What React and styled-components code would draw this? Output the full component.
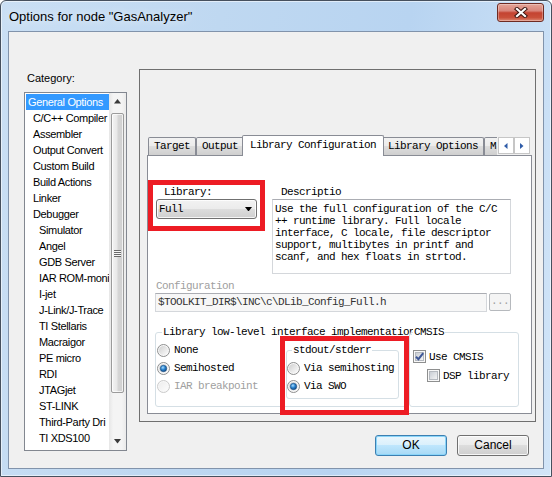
import React, { useId } from "react";
import styled, { createGlobalStyle } from "styled-components";

const UI = `"Liberation Sans", Arial, sans-serif`;
const MONO = `"Liberation Mono", "DejaVu Sans Mono", monospace`;

const GlobalStyle = createGlobalStyle`
  html, body { margin: 0; padding: 0; }
  body { width: 552px; height: 477px; overflow: hidden; background: #fff; }
  * { box-sizing: border-box; }
`;

// names are shown as the narrow list cuts them
const categories = [
  ["General Options", 0],
  ["C/C++ Compiler", 1],
  ["Assembler", 1],
  ["Output Convert", 1],
  ["Custom Build", 1],
  ["Build Actions", 1],
  ["Linker", 1],
  ["Debugger", 1],
  ["Simulator", 2],
  ["Angel", 2],
  ["GDB Server", 2],
  ["IAR ROM-moni", 2],
  ["I-jet", 2],
  ["J-Link/J-Trace", 2],
  ["TI Stellaris", 2],
  ["Macraigor", 2],
  ["PE micro", 2],
  ["RDI", 2],
  ["JTAGjet", 2],
  ["ST-LINK", 2],
  ["Third-Party Dri", 2],
  ["TI XDS100", 2],
];

const description = [
  "Use the full configuration of the C/C",
  "++ runtime library. Full locale",
  "interface, C locale, file descriptor",
  "support, multibytes in printf and",
  "scanf, and hex floats in strtod.",
];

const tabs = ["Target", "Output", "Library Configuration", "Library Options", "M"];

/* ---------- window frame ---------- */

const Window = styled.div`
  width: 552px;
  height: 477px;
  display: flex;
  flex-direction: column;
  padding: 0 7px 7px;
  border: 1px solid #46505e;
  border-radius: 6px 6px 0 0;
  background: linear-gradient(100deg, #cadff4 0%, #bfd8f1 35%, #b8d4f1 65%, #d2e5f8 100%);
  box-shadow: inset 0 0 0 1px rgba(255, 255, 255, 0.55);
`;

const TitleBar = styled.div`
  height: 30px;
  display: flex;
  justify-content: space-between;
  align-items: flex-start;
`;

const Title = styled.div`
  margin-left: 1px;
  font-family: ${UI};
  font-size: 13px;
  line-height: 31px;
  color: #000;
  text-shadow: 0 0 8px rgba(255, 255, 255, 0.9);
`;

const CloseButton = styled.div`
  margin-top: 2px;
  width: 47px;
  height: 19px;
  border: 1px solid #6e2b23;
  border-radius: 3px;
  background: linear-gradient(#e4a497 0%, #d9857a 40%, #c44331 52%, #c9503a 80%, #dd8a76 100%);
  box-shadow: inset 0 0 0 1px rgba(255, 255, 255, 0.3);
  display: flex;
  align-items: center;
  justify-content: center;
`;

const Client = styled.div`
  flex: 1;
  display: flex;
  border: 1px solid #8193ab;
  background: #f0f0f0;
  padding: 37px 7px 0 15px;
`;

/* ---------- category list ---------- */

const Sidebar = styled.div`
  width: 103px;
  display: flex;
  flex-direction: column;
  padding-top: 2px;
`;

const SideLabel = styled.div`
  margin-left: 3px;
  font-family: ${UI};
  font-size: 11px;
  line-height: 14px;
  color: #000;
`;

const ListBox = styled.div`
  margin-top: 7px;
  height: 359px;
  border: 1px solid #828790;
  background: #fff;
  display: flex;
`;

const Items = styled.div`
  flex: 1;
  min-width: 0;
  padding: 1px 0 0 1px;
  overflow: hidden;
`;

const Item = styled.div`
  height: 16px;
  line-height: 16px;
  padding-left: ${(p) => 2 + [0, 5, 11][p.$level]}px;
  font-family: ${UI};
  font-size: 11px;
  letter-spacing: -0.35px;
  white-space: nowrap;
  color: ${(p) => (p.$selected ? "#fff" : "#000")};
  background: ${(p) => (p.$selected ? "#3399ff" : "transparent")};
`;

const ScrollBar = styled.div`
  width: 17px;
  flex-shrink: 0;
  display: flex;
  flex-direction: column;
  background: linear-gradient(90deg, #e6e6e6 0%, #f4f4f4 25%, #f4f4f4 75%, #eaeaea 100%);
`;

const ScrollArrow = styled.div`
  height: 17px;
  display: flex;
  align-items: center;
  justify-content: center;
`;

const Track = styled.div`
  flex: 1;
  display: flex;
  flex-direction: column;
  padding: 3px 2px 0;
`;

const Thumb = styled.div`
  height: 280px;
  border: 1px solid #9b9b9b;
  border-radius: 2px;
  background: linear-gradient(90deg, #f4f4f4 0%, #e8e8e8 45%, #d6d6d6 55%, #cfcfcf 100%);
  box-shadow: inset 0 0 0 1px rgba(255, 255, 255, 0.7);
  display: flex;
  align-items: center;
  justify-content: center;
`;

const Grip = styled.div`
  width: 7px;
  height: 7px;
  background: repeating-linear-gradient(#6a6a6a 0 1px, #f6f6f6 1px 2px);
`;

/* ---------- main panel ---------- */

const Main = styled.div`
  margin-left: 12px;
  width: 397px;
  display: flex;
  flex-direction: column;
`;

const Panel = styled.div`
  height: 353px;
  border: 1px solid #6f6f6f;
  padding: 65px 3px 7px 7px;
  display: flex;
  flex-direction: column;
`;

const TabStrip = styled.div`
  position: relative;
  z-index: 1;
  height: 21px;
  margin-bottom: -1px;
  display: flex;
  align-items: flex-start;
`;

const TabList = styled.div`
  flex: 1;
  height: 21px;
  padding-left: 1px;
  overflow: hidden;
  display: flex;
  align-items: flex-end;
`;

const Tab = styled.div`
  flex-shrink: 0;
  position: relative;
  z-index: ${(p) => (p.$active ? 2 : 1)};
  height: ${(p) => (p.$active ? 21 : 18)}px;
  margin: 0 ${(p) => (p.$active ? -2 : 0)}px ${(p) => (p.$active ? 0 : 1)}px;
  padding: 0 ${(p) => (p.$active ? 7 : 5)}px;
  border: 1px solid #898c95;
  border-bottom: none;
  border-radius: 2px 2px 0 0;
  background: ${(p) =>
    p.$active ? "#fff" : "linear-gradient(#f2f2f2 0%, #ebebeb 50%, #dddddd 50%, #cfcfcf 100%)"};
  font-family: ${MONO};
  font-size: 11px;
  letter-spacing: -0.6px;
  line-height: ${(p) => (p.$active ? 18 : 17)}px;
  color: #000;
  white-space: nowrap;
`;

const TabScroller = styled.div`
  margin: 2px 2px 0 1px;
  display: flex;
`;

const TabArrow = styled.div`
  width: 16px;
  height: 17px;
  border: 1px solid #c6c6c6;
  background: #fff;
  display: flex;
  align-items: center;
  justify-content: center;
`;

const TabBody = styled.div`
  flex: 1;
  border: 1px solid #898c95;
  background: #fff;
  display: flex;
  flex-direction: column;
  font-family: ${MONO};
  font-size: 11px;
  letter-spacing: -0.6px;
  color: #000;
`;

const TopRow = styled.div`
  margin-top: 24px;
  display: flex;
  align-items: flex-start;
`;

const Highlight = styled.div`
  flex-shrink: 0;
  width: ${(p) => p.$w}px;
  height: ${(p) => p.$h}px;
  border: 5px solid #ed1c24;
`;

const FieldLabel = styled.div`
  margin-left: ${(p) => p.$indent || 0}px;
  line-height: 13px;
  white-space: nowrap;
  color: ${(p) => (p.$disabled ? "#a0a0a0" : "#000")};
`;

const LibraryBox = styled(Highlight)`
  padding-top: 1px;
`;

const Combo = styled.div`
  width: 101px;
  height: 20px;
  margin-left: 3px;
  padding: 0 4px 0 2px;
  border: 1px solid #707070;
  border-radius: 3px;
  background: linear-gradient(#f2f2f2 0%, #ebebeb 50%, #dddddd 50%, #cfcfcf 100%);
  box-shadow: inset 0 0 0 1px rgba(255, 255, 255, 0.8);
  display: flex;
  align-items: center;
  justify-content: space-between;
`;

const DescBlock = styled.div`
  margin: 6px 0 0 7px;
`;

const TextBox = styled.div`
  width: ${(p) => p.$w}px;
  height: ${(p) => p.$h}px;
  border: 1px solid #d4d7db;
  border-top-color: #abadb3;
  background: ${(p) => (p.$disabled ? "#f7f7f7" : "#fff")};
  padding: ${(p) => (p.$disabled ? "0 2px" : "3px 2px 0")};
  line-height: ${(p) => (p.$disabled ? 17 : 12)}px;
  color: ${(p) => (p.$disabled ? "#333" : "#000")};
  white-space: pre;
  overflow: hidden;
`;

const ConfigBlock = styled.div`
  margin-top: 6px;
  padding-left: 7px;
  display: flex;
  flex-direction: column;
`;

const ConfigRow = styled.div`
  display: flex;
  gap: 2px;
  align-items: flex-start;
`;

const SmallButton = styled.div`
  width: 22px;
  height: 18px;
  border: 1px solid #b6b9bd;
  border-radius: 2px;
  background: #f4f4f4;
  color: #a0a0a0;
  line-height: 14px;
  text-align: center;
`;

const GroupRow = styled.div`
  margin-top: 20px;
  padding-left: 7px;
  display: flex;
  gap: 1px;
`;

const Group = styled.div`
  position: relative;
  flex-shrink: 0;
  width: ${(p) => p.$w}px;
  height: ${(p) => p.$h}px;
  margin: ${(p) => p.$m || 0};
  border: 1px solid #d5dfe5;
  border-radius: 3px;
  box-shadow: inset 0 0 0 1px #fff;
  display: flex;
  padding: ${(p) => p.$pad || 0};
`;

const Legend = styled.span`
  position: absolute;
  top: -7px;
  left: ${(p) => p.$left}px;
  padding: 0 1px;
  background: #fff;
  line-height: 12px;
  white-space: nowrap;
`;

const Column = styled.div`
  display: flex;
  flex-direction: column;
  padding: ${(p) => p.$pad || 0};
`;

const OptionRow = styled.div`
  height: ${(p) => p.$h || 18}px;
  margin: ${(p) => p.$m || 0};
  display: flex;
  align-items: center;
  gap: ${(p) => p.$gap || 4}px;
  white-space: nowrap;
  color: ${(p) => (p.$disabled ? "#a0a0a0" : "#000")};
  svg {
    flex-shrink: 0;
  }
`;

const StdoutBox = styled(Highlight)`
  margin: 3px -3px 0 auto;
  position: relative;
  z-index: 1;
`;

/* ---------- buttons ---------- */

const ButtonRow = styled.div`
  margin-top: 13px;
  padding-right: 7px;
  display: flex;
  justify-content: flex-end;
  gap: 10px;
`;

const Button = styled.div`
  width: 72px;
  height: 21px;
  border: 1px solid ${(p) => (p.$default ? "#3c7fb1" : "#707070")};
  border-radius: 3px;
  background: ${(p) =>
    p.$default
      ? "linear-gradient(#eaf6fd 0%, #d9f0fc 50%, #bee6fd 50%, #a7d9f5 100%)"
      : "linear-gradient(#f2f2f2 0%, #ebebeb 50%, #dddddd 50%, #cfcfcf 100%)"};
  box-shadow: inset 0 0 0 1px ${(p) => (p.$default ? "#8ad5f9" : "rgba(255,255,255,0.8)")};
  font-family: ${UI};
  font-size: 12px;
  line-height: 19px;
  text-align: center;
  color: #000;
`;

/* ---------- drawings ---------- */

function CloseGlyph() {
  return (
    <svg width="14" height="11" viewBox="0 0 14 11">
      <path d="M3 2 L11 9 M11 2 L3 9" stroke="#3f1712" strokeWidth="4.2" strokeLinecap="square" />
      <path d="M3 2 L11 9 M11 2 L3 9" stroke="#fff" strokeWidth="2.2" strokeLinecap="square" />
    </svg>
  );
}

function Triangle({ dir = "down", color = "#3a3a3a", size = 7 }) {
  const h = Math.ceil(size / 2) + 0.5;
  const pts = {
    down: `0,0 ${size},0 ${size / 2},${h}`,
    up: `0,${h} ${size},${h} ${size / 2},0`,
    left: `${h},0 ${h},${size} 0,${size / 2}`,
    right: `0,0 0,${size} ${h},${size / 2}`,
  }[dir];
  const horiz = dir === "up" || dir === "down";
  return (
    <svg width={horiz ? size : h} height={horiz ? h : size}>
      <polygon points={pts} fill={color} />
    </svg>
  );
}

function RadioMark({ checked, disabled }) {
  const id = useId().replace(/:/g, "");
  return (
    <svg width="13" height="13" viewBox="0 0 13 13">
      <defs>
        <linearGradient id={`rf${id}`} x1="0" y1="0" x2="1" y2="1">
          <stop offset="0" stopColor={disabled ? "#ededed" : "#cfcfcf"} />
          <stop offset="1" stopColor="#fcfcfc" />
        </linearGradient>
        <radialGradient id={`rd${id}`} cx="0.4" cy="0.35" r="0.75">
          <stop offset="0" stopColor="#a8ddff" />
          <stop offset="0.45" stopColor="#2a83cf" />
          <stop offset="1" stopColor="#0c3d73" />
        </radialGradient>
      </defs>
      <circle cx="6.5" cy="6.5" r="6" fill="#f8f8f8" stroke={disabled ? "#cacaca" : "#8e8f8f"} />
      <circle cx="6.5" cy="6.5" r="4.6" fill={`url(#rf${id})`} />
      {checked && <circle cx="6.5" cy="6.5" r="3.2" fill={`url(#rd${id})`} stroke="#1a4b80" strokeWidth="0.6" />}
    </svg>
  );
}

function CheckMark({ checked }) {
  const id = useId().replace(/:/g, "");
  return (
    <svg width="13" height="13" viewBox="0 0 13 13">
      <defs>
        <linearGradient id={`cf${id}`} x1="0" y1="0" x2="1" y2="1">
          <stop offset="0" stopColor="#c6cbd2" />
          <stop offset="1" stopColor="#f6f6f6" />
        </linearGradient>
      </defs>
      <rect x="0.5" y="0.5" width="12" height="12" fill="#f8f8f8" stroke="#8e8f8f" />
      <rect x="2.5" y="2.5" width="8" height="8" fill={`url(#cf${id})`} stroke="#b5b9bf" />
      {checked && (
        <path d="M3 6.8 L5.4 9.2 L10.2 3.2" fill="none" stroke="#3e5797" strokeWidth="2" />
      )}
    </svg>
  );
}

/* ---------- page ---------- */

export default function App() {
  return (
    <>
      <GlobalStyle />
      <Window>
        <TitleBar>
          <Title>Options for node "GasAnalyzer"</Title>
          <CloseButton>
            <CloseGlyph />
          </CloseButton>
        </TitleBar>

        <Client>
          <Sidebar>
            <SideLabel>Category:</SideLabel>
            <ListBox>
              <Items>
                {categories.map(([name, level], i) => (
                  <Item key={name} $level={level} $selected={i === 0}>
                    {name}
                  </Item>
                ))}
              </Items>
              <ScrollBar>
                <ScrollArrow>
                  <Triangle dir="up" />
                </ScrollArrow>
                <Track>
                  <Thumb>
                    <Grip />
                  </Thumb>
                </Track>
                <ScrollArrow>
                  <Triangle dir="down" />
                </ScrollArrow>
              </ScrollBar>
            </ListBox>
          </Sidebar>

          <Main>
            <Panel>
              <TabStrip>
                <TabList>
                  {tabs.map((t) => (
                    <Tab key={t} $active={t === "Library Configuration"}>
                      {t}
                    </Tab>
                  ))}
                </TabList>
                <TabScroller>
                  <TabArrow>
                    <Triangle dir="left" color="#2f5ca8" size={6} />
                  </TabArrow>
                  <TabArrow>
                    <Triangle dir="right" color="#2f5ca8" size={6} />
                  </TabArrow>
                </TabScroller>
              </TabStrip>

              <TabBody>
                <TopRow>
                  <LibraryBox $w={117} $h={51}>
                    <FieldLabel $indent={11}>Library:</FieldLabel>
                    <Combo>
                      <span>Full</span>
                      <Triangle dir="down" color="#000" />
                    </Combo>
                  </LibraryBox>
                  <DescBlock>
                    <FieldLabel $indent={9}>Descriptio</FieldLabel>
                    <TextBox $w={239} $h={75}>
                      {description.join("\n")}
                    </TextBox>
                  </DescBlock>
                </TopRow>

                <ConfigBlock>
                  <FieldLabel $indent={1} $disabled>
                    Configuration
                  </FieldLabel>
                  <ConfigRow>
                    <TextBox $w={332} $h={19} $disabled>
                      {"$TOOLKIT_DIR$\\INC\\c\\DLib_Config_Full.h"}
                    </TextBox>
                    <SmallButton>...</SmallButton>
                  </ConfigRow>
                </ConfigBlock>

                <GroupRow>
                  <Group $w={252} $h={75}>
                    <Legend $left={6}>Library low-level interface implementation</Legend>
                    <Column $pad="8px 0 0 1px">
                      <OptionRow>
                        <RadioMark />
                        None
                      </OptionRow>
                      <OptionRow>
                        <RadioMark checked />
                        Semihosted
                      </OptionRow>
                      <OptionRow $disabled>
                        <RadioMark disabled />
                        IAR breakpoint
                      </OptionRow>
                    </Column>
                    <StdoutBox $w={129} $h={79}>
                      <Group $w={113} $h={49} $m="9px 0 0 1px" $pad="8px 0 0 0">
                        <Legend $left={5}>stdout/stderr</Legend>
                        <Column>
                          <OptionRow>
                            <RadioMark />
                            Via semihosting
                          </OptionRow>
                          <OptionRow>
                            <RadioMark checked />
                            Via SWO
                          </OptionRow>
                        </Column>
                      </Group>
                    </StdoutBox>
                  </Group>

                  <Group $w={110} $h={75} $m="0 0 0 1px" $pad="17px 0 0 3px">
                    <Legend $left={3}>CMSIS</Legend>
                    <Column>
                      <OptionRow $h={13} $gap={3}>
                        <CheckMark checked />
                        Use CMSIS
                      </OptionRow>
                      <OptionRow $h={13} $gap={3} $m="6px 0 0 14px">
                        <CheckMark />
                        DSP library
                      </OptionRow>
                    </Column>
                  </Group>
                </GroupRow>
              </TabBody>
            </Panel>

            <ButtonRow>
              <Button $default>OK</Button>
              <Button>Cancel</Button>
            </ButtonRow>
          </Main>
        </Client>
      </Window>
    </>
  );
}
